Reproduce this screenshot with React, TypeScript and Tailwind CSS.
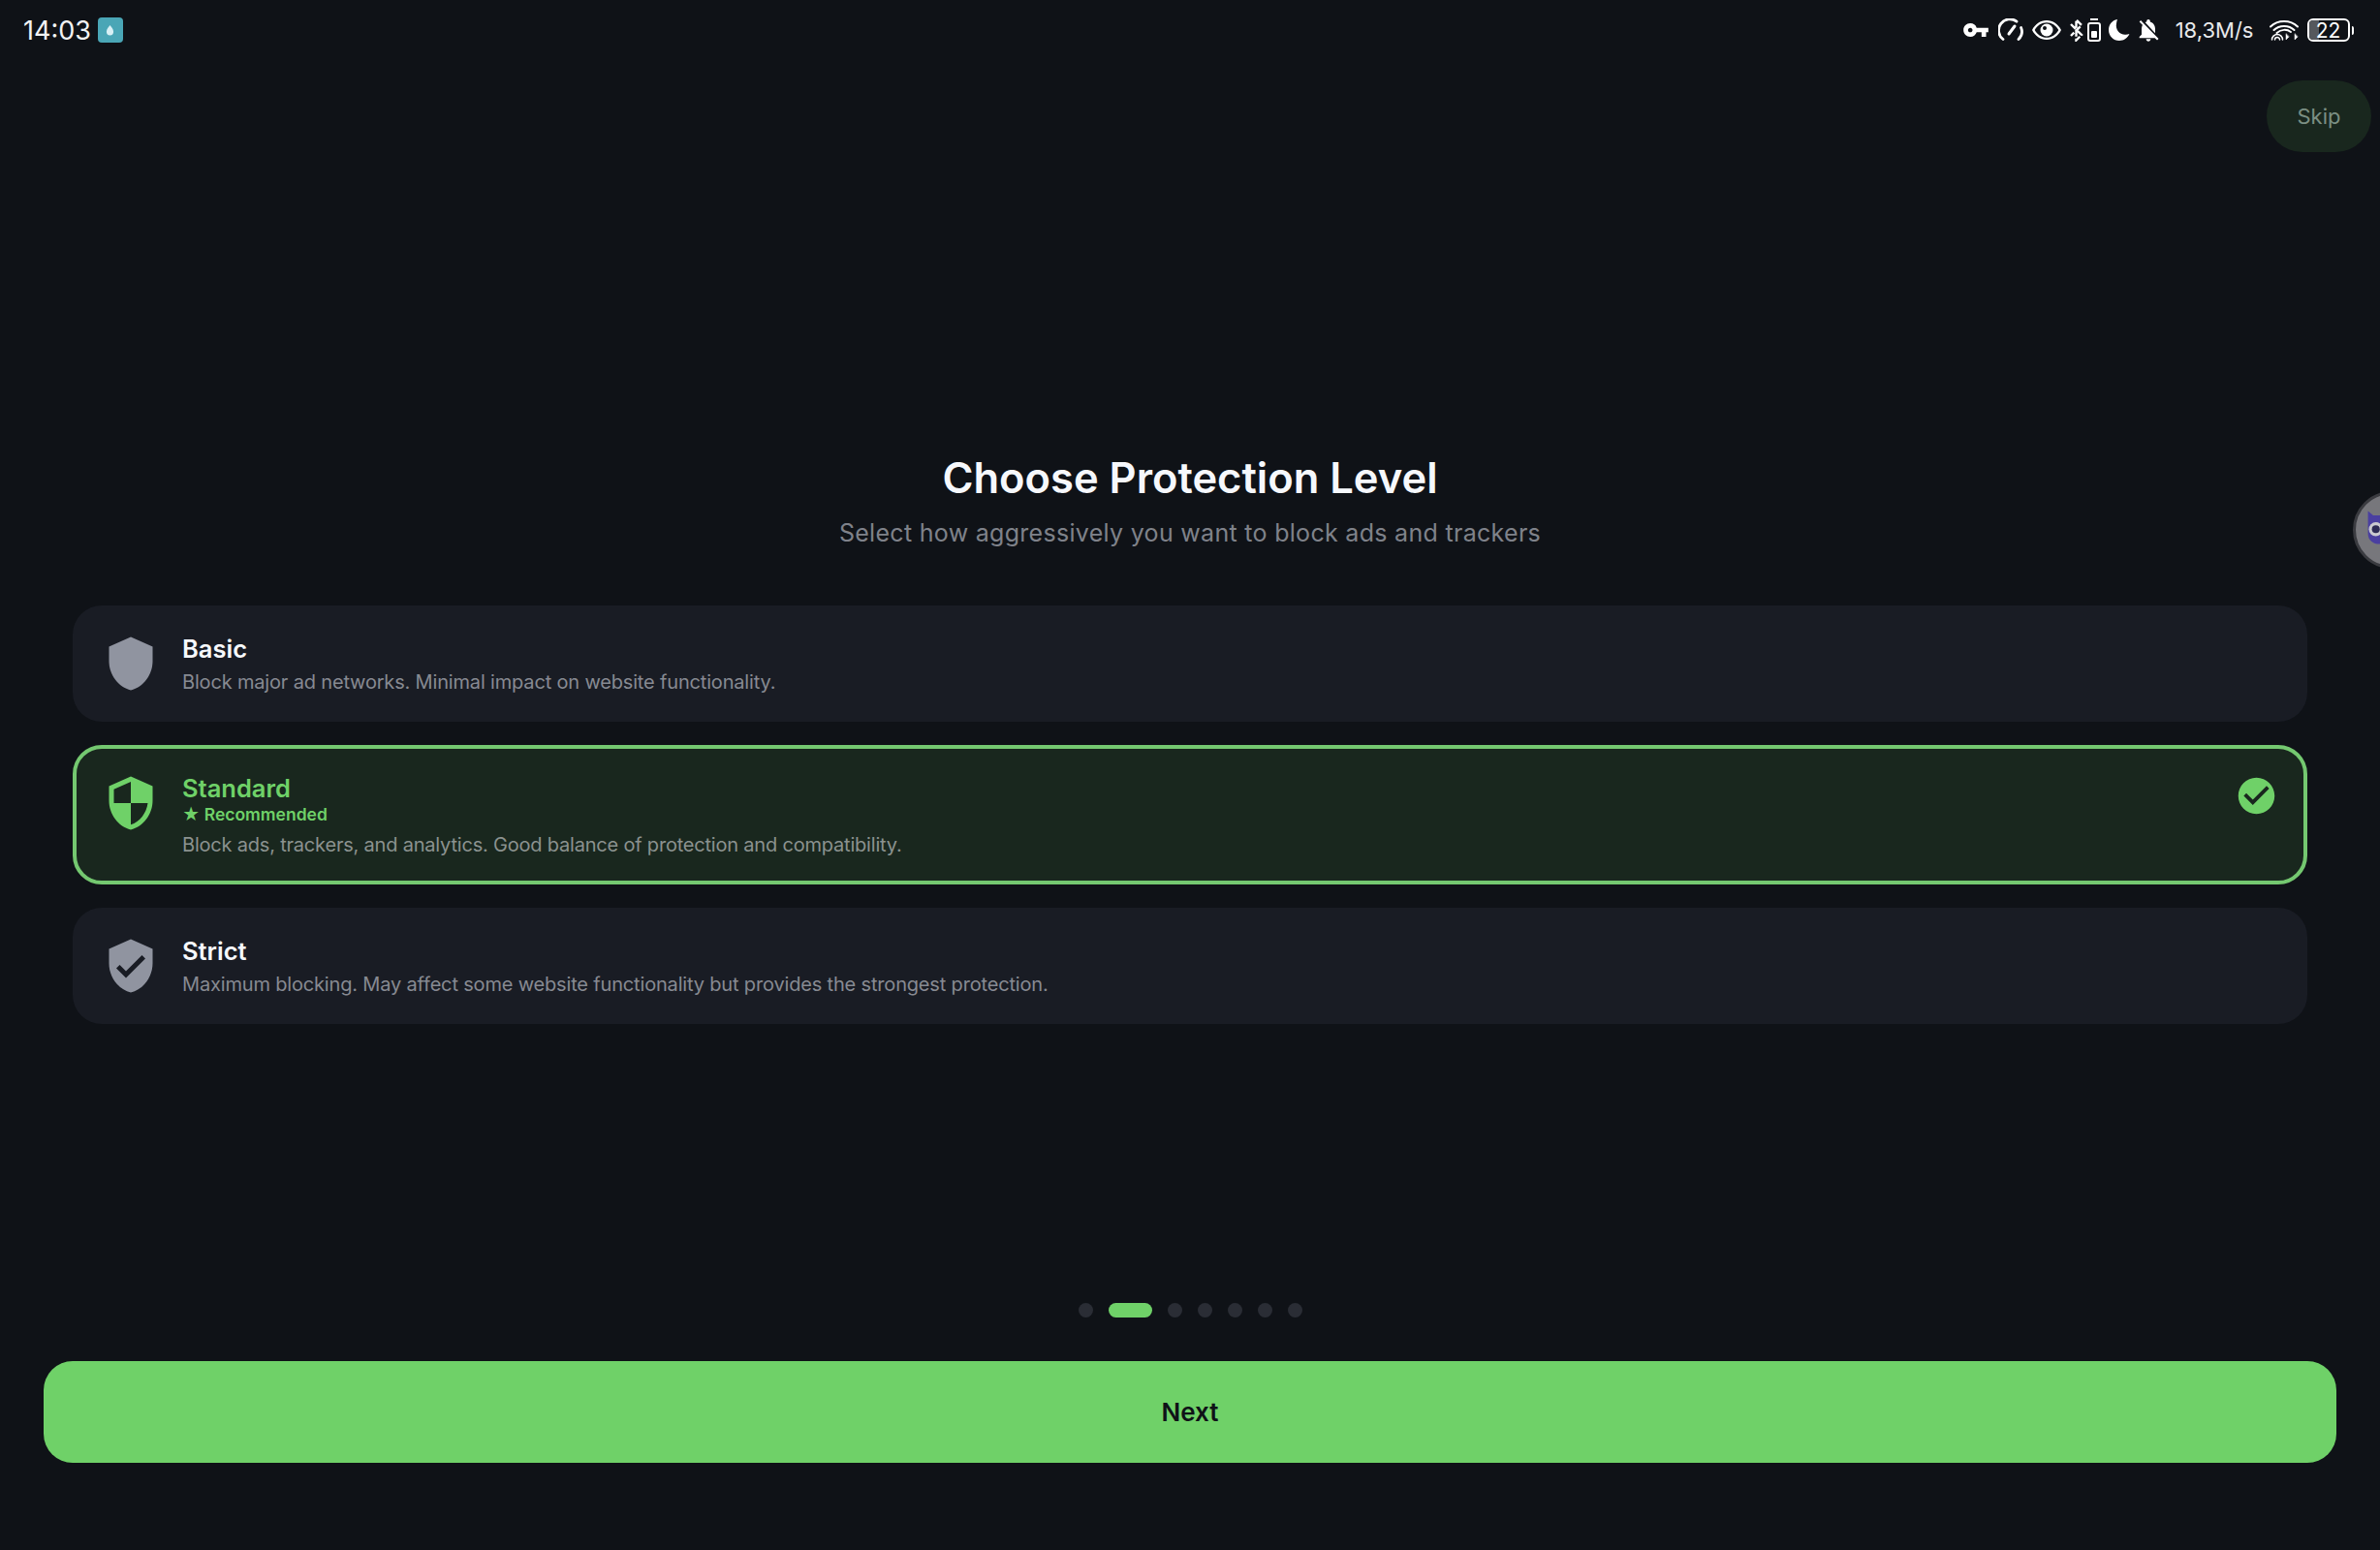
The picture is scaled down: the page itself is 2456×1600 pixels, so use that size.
import React from 'react';
import { MdShield, MdSecurity, MdVerifiedUser, MdCheckCircle, MdVpnKey, MdNotificationsOff } from 'react-icons/md';

const font = { fontFamily: 'Inter, "Noto Sans", sans-serif' };

const StatusIcons = () => (
  <div className="flex items-center text-white">
    <MdVpnKey className="w-[28px] h-[28px]" />
    {/* gauge */}
    <svg viewBox="0 0 26 24" className="w-[26px] h-[24px] ml-[9px]" fill="none" stroke="currentColor" strokeWidth="2.8" strokeLinecap="round">
      <path d="M5 21.5A11 11 0 0 1 19 3.2" />
      <path d="M23.6 9.5A11 11 0 0 1 21 21.5" />
      <path d="M11 16l6-8" strokeWidth="3" />
    </svg>
    {/* eye */}
    <svg viewBox="0 0 30 20" className="w-[30px] h-[20px] ml-[9px]">
      <path fill="currentColor" fillRule="evenodd" d="M15 0C8.500 0 3 4 0 10c3 6 8.500 10 15 10s12-4 15-10C27 4 21.500 0 15 0zm0 2.200c5.200 0 9.600 3 12.300 7.800-2.700 4.800-7.100 7.800-12.300 7.800S5.400 14.800 2.700 10C5.400 5.200 9.800 2.200 15 2.200z" />
      <circle cx="15" cy="10" r="6.500" fill="currentColor" />
      <circle cx="13" cy="8" r="2" fill="#0f1217" />
    </svg>
    {/* bluetooth + battery saver */}
    <svg viewBox="0 0 32 24" className="w-[32px] h-[24px] ml-[9px]" fill="none" stroke="currentColor">
      <path d="M1 6l11 11-5.500 5.500V1.500L12 7 1 18" strokeWidth="2.400" strokeDasharray="7 2" />
      <path d="M21 1h8" strokeWidth="2" />
      <rect x="19" y="5" width="12" height="18" rx="2" strokeWidth="2" />
      <rect x="22" y="13" width="6" height="7" rx="1" fill="currentColor" stroke="none" />
    </svg>
    {/* moon */}
    <svg viewBox="0 0 24 24" className="w-[24px] h-[24px] ml-[7px]">
      <path fill="currentColor" d="M10 1C4.500 2 1 6.500 1 12c0 6.100 4.900 11 11 11 4.600 0 8.700-2.800 10.400-7-1.400.6-2.900.9-4.400.8C12 16.800 7.700 11 9 5.200c.2-1.500.5-3 1-4.200z" />
    </svg>
    <MdNotificationsOff className="w-[28px] h-[28px] ml-[4px]" />
    <span className="ml-[14px] text-[22px] leading-none text-[#e8e9eb]">18,3M/s</span>
    {/* wifi */}
    <svg viewBox="0 0 30 24" className="w-[30px] h-[24px] ml-[16px]" fill="none" stroke="currentColor" strokeWidth="2" strokeLinecap="round">
      <path d="M1 8.500C8.500 1 21.500 1 29 8.500" />
      <path d="M4.500 12C10 6.500 20 6.500 25.500 12" />
      <path d="M7.500 15C12 11 18 11 22 14" />
      <path d="M2.500 22a5.500 5.500 0 0 1 11 0" strokeWidth="1.500" />
      <path d="M5.500 22a2.500 2.500 0 0 1 5 0" strokeWidth="1.500" />
      <path d="M17 16v6l3-3zM26 16v6l3-3z" fill="currentColor" strokeWidth="0.500" />
    </svg>
    {/* battery */}
    <div className="ml-[9px] flex items-center">
      <div className="relative w-[44px] h-[24px] rounded-[6px] border-2 border-white overflow-hidden flex items-center justify-center">
        <div className="absolute left-0 top-0 bottom-0 w-[10px] bg-[#55585d]" />
        <span className="relative text-[21px] leading-none text-white">22</span>
      </div>
      <div className="ml-[2px] w-[2.500px] h-[9px] rounded-r-full bg-white" />
    </div>
  </div>
);

type LevelProps = {
  icon: React.ReactNode;
  title: string;
  desc: string;
  recommended?: boolean;
  selected?: boolean;
};

const Level = ({ icon, title, desc, recommended, selected }: LevelProps) => (
  <div className={selected
    ? 'flex items-start gap-[23px] p-[26px] rounded-[30px] border-4 border-[#74c870] bg-[#19271e]'
    : 'flex items-start gap-[23px] p-[26px] rounded-[30px] border-4 border-transparent bg-[#191c24]'}>
    <div className="w-[60px] h-[60px] shrink-0">{icon}</div>
    <div className="flex-1 min-w-0">
      <div className={selected ? 'text-[25.5px] leading-[30px] font-semibold text-[#6fd168]' : 'text-[25.5px] leading-[30px] font-semibold text-[#f6f8fc]'}>{title}</div>
      {recommended && (
        <div className="text-[17.5px] leading-[24px] font-semibold text-[#6fd168]">★ Recommended</div>
      )}
      <div className={selected ? 'mt-[8px] text-[20px] leading-[22px] tracking-[-0.2px] text-[#8b928f]' : 'mt-[8px] text-[20px] leading-[22px] tracking-[-0.17px] text-[#878a92]'}>{desc}</div>
    </div>
    {selected && <MdCheckCircle className="w-[45px] h-[45px] text-[#6fd168] shrink-0" />}
  </div>
);

export default function App() {
  return (
    <div style={font} className="relative w-[2456px] h-[1600px] overflow-hidden bg-[#0f1217] flex flex-col">
      {/* status bar */}
      <div className="h-[62px] pl-[24px] pr-[27px] flex items-center justify-between">
        <div className="flex items-center gap-[7px]">
          <span className="text-[27px] leading-none text-[#f2f3f4]">14:03</span>
          <div className="w-[26px] h-[26px] rounded-[4px] bg-[#4aa6b6] flex items-center justify-center">
            <svg viewBox="0 0 10 12" className="w-[9px] h-[11px]"><path fill="#d8f0f5" d="M5 0C3.500 2 1 4.500 1 7.500a4 4 0 0 0 8 0C9 4.500 6.500 2 5 0z" /></svg>
          </div>
        </div>
        <StatusIcons />
      </div>

      {/* skip */}
      <div className="mt-[21px] pr-[9px] flex justify-end">
        <button className="w-[108px] h-[74px] rounded-full bg-[#19271e] text-[22px] text-[#7b8f83]">Skip</button>
      </div>

      {/* content */}
      <div className="mt-[308px] px-[75px]">
        <h1 className="text-center text-[43.5px] leading-[56px] font-semibold text-[#f6f8fc]">Choose Protection Level</h1>
        <p className="mt-[11px] text-center text-[25px] leading-[36px] tracking-[0.3px] text-[#7f828a]">Select how aggressively you want to block ads and trackers</p>
        <div className="mt-[57px] flex flex-col gap-[24px]">
          <Level
            icon={<MdShield className="w-full h-full text-[#9094a0]" />}
            title="Basic"
            desc="Block major ad networks. Minimal impact on website functionality."
          />
          <Level
            selected
            recommended
            icon={<MdSecurity className="w-full h-full text-[#6fd168]" />}
            title="Standard"
            desc="Block ads, trackers, and analytics. Good balance of protection and compatibility."
          />
          <Level
            icon={<MdVerifiedUser className="w-full h-full text-[#9094a0]" />}
            title="Strict"
            desc="Maximum blocking. May affect some website functionality but provides the strongest protection."
          />
        </div>
      </div>

      {/* pager + next */}
      <div className="mt-auto mb-[45px] flex justify-center items-center gap-[16px]">
        <div className="w-[15px] h-[15px] rounded-full bg-[#2a2d35]" />
        <div className="w-[45px] h-[15px] rounded-full bg-[#6fd168]" />
        <div className="w-[15px] h-[15px] rounded-full bg-[#2a2d35]" />
        <div className="w-[15px] h-[15px] rounded-full bg-[#2a2d35]" />
        <div className="w-[15px] h-[15px] rounded-full bg-[#2a2d35]" />
        <div className="w-[15px] h-[15px] rounded-full bg-[#2a2d35]" />
        <div className="w-[15px] h-[15px] rounded-full bg-[#2a2d35]" />
      </div>
      <div className="px-[45px] pb-[90px]">
        <button className="w-full h-[105px] rounded-[30px] bg-[#6fd168] text-[26px] font-semibold text-[#0f1217]">Next</button>
      </div>

      {/* floating bubble on the edge */}
      <div className="absolute left-[2428px] top-[507px] w-[80px] h-[80px] rounded-full bg-[#77777c] border-[3px] border-[#3a3b40] overflow-hidden">
        <svg viewBox="0 0 40 50" className="absolute left-[9px] top-[12px] w-[36px] h-[45px]">
          <path fill="#4a3fa0" d="M4 6l6 5h10l6-5 4 12v14c0 8-6 12-13 12S4 40 4 32z" />
          <circle cx="13" cy="27" r="8" fill="#c9c9cf" />
          <circle cx="13" cy="27" r="4.500" fill="#2c2a55" />
        </svg>
      </div>
    </div>
  );
}
